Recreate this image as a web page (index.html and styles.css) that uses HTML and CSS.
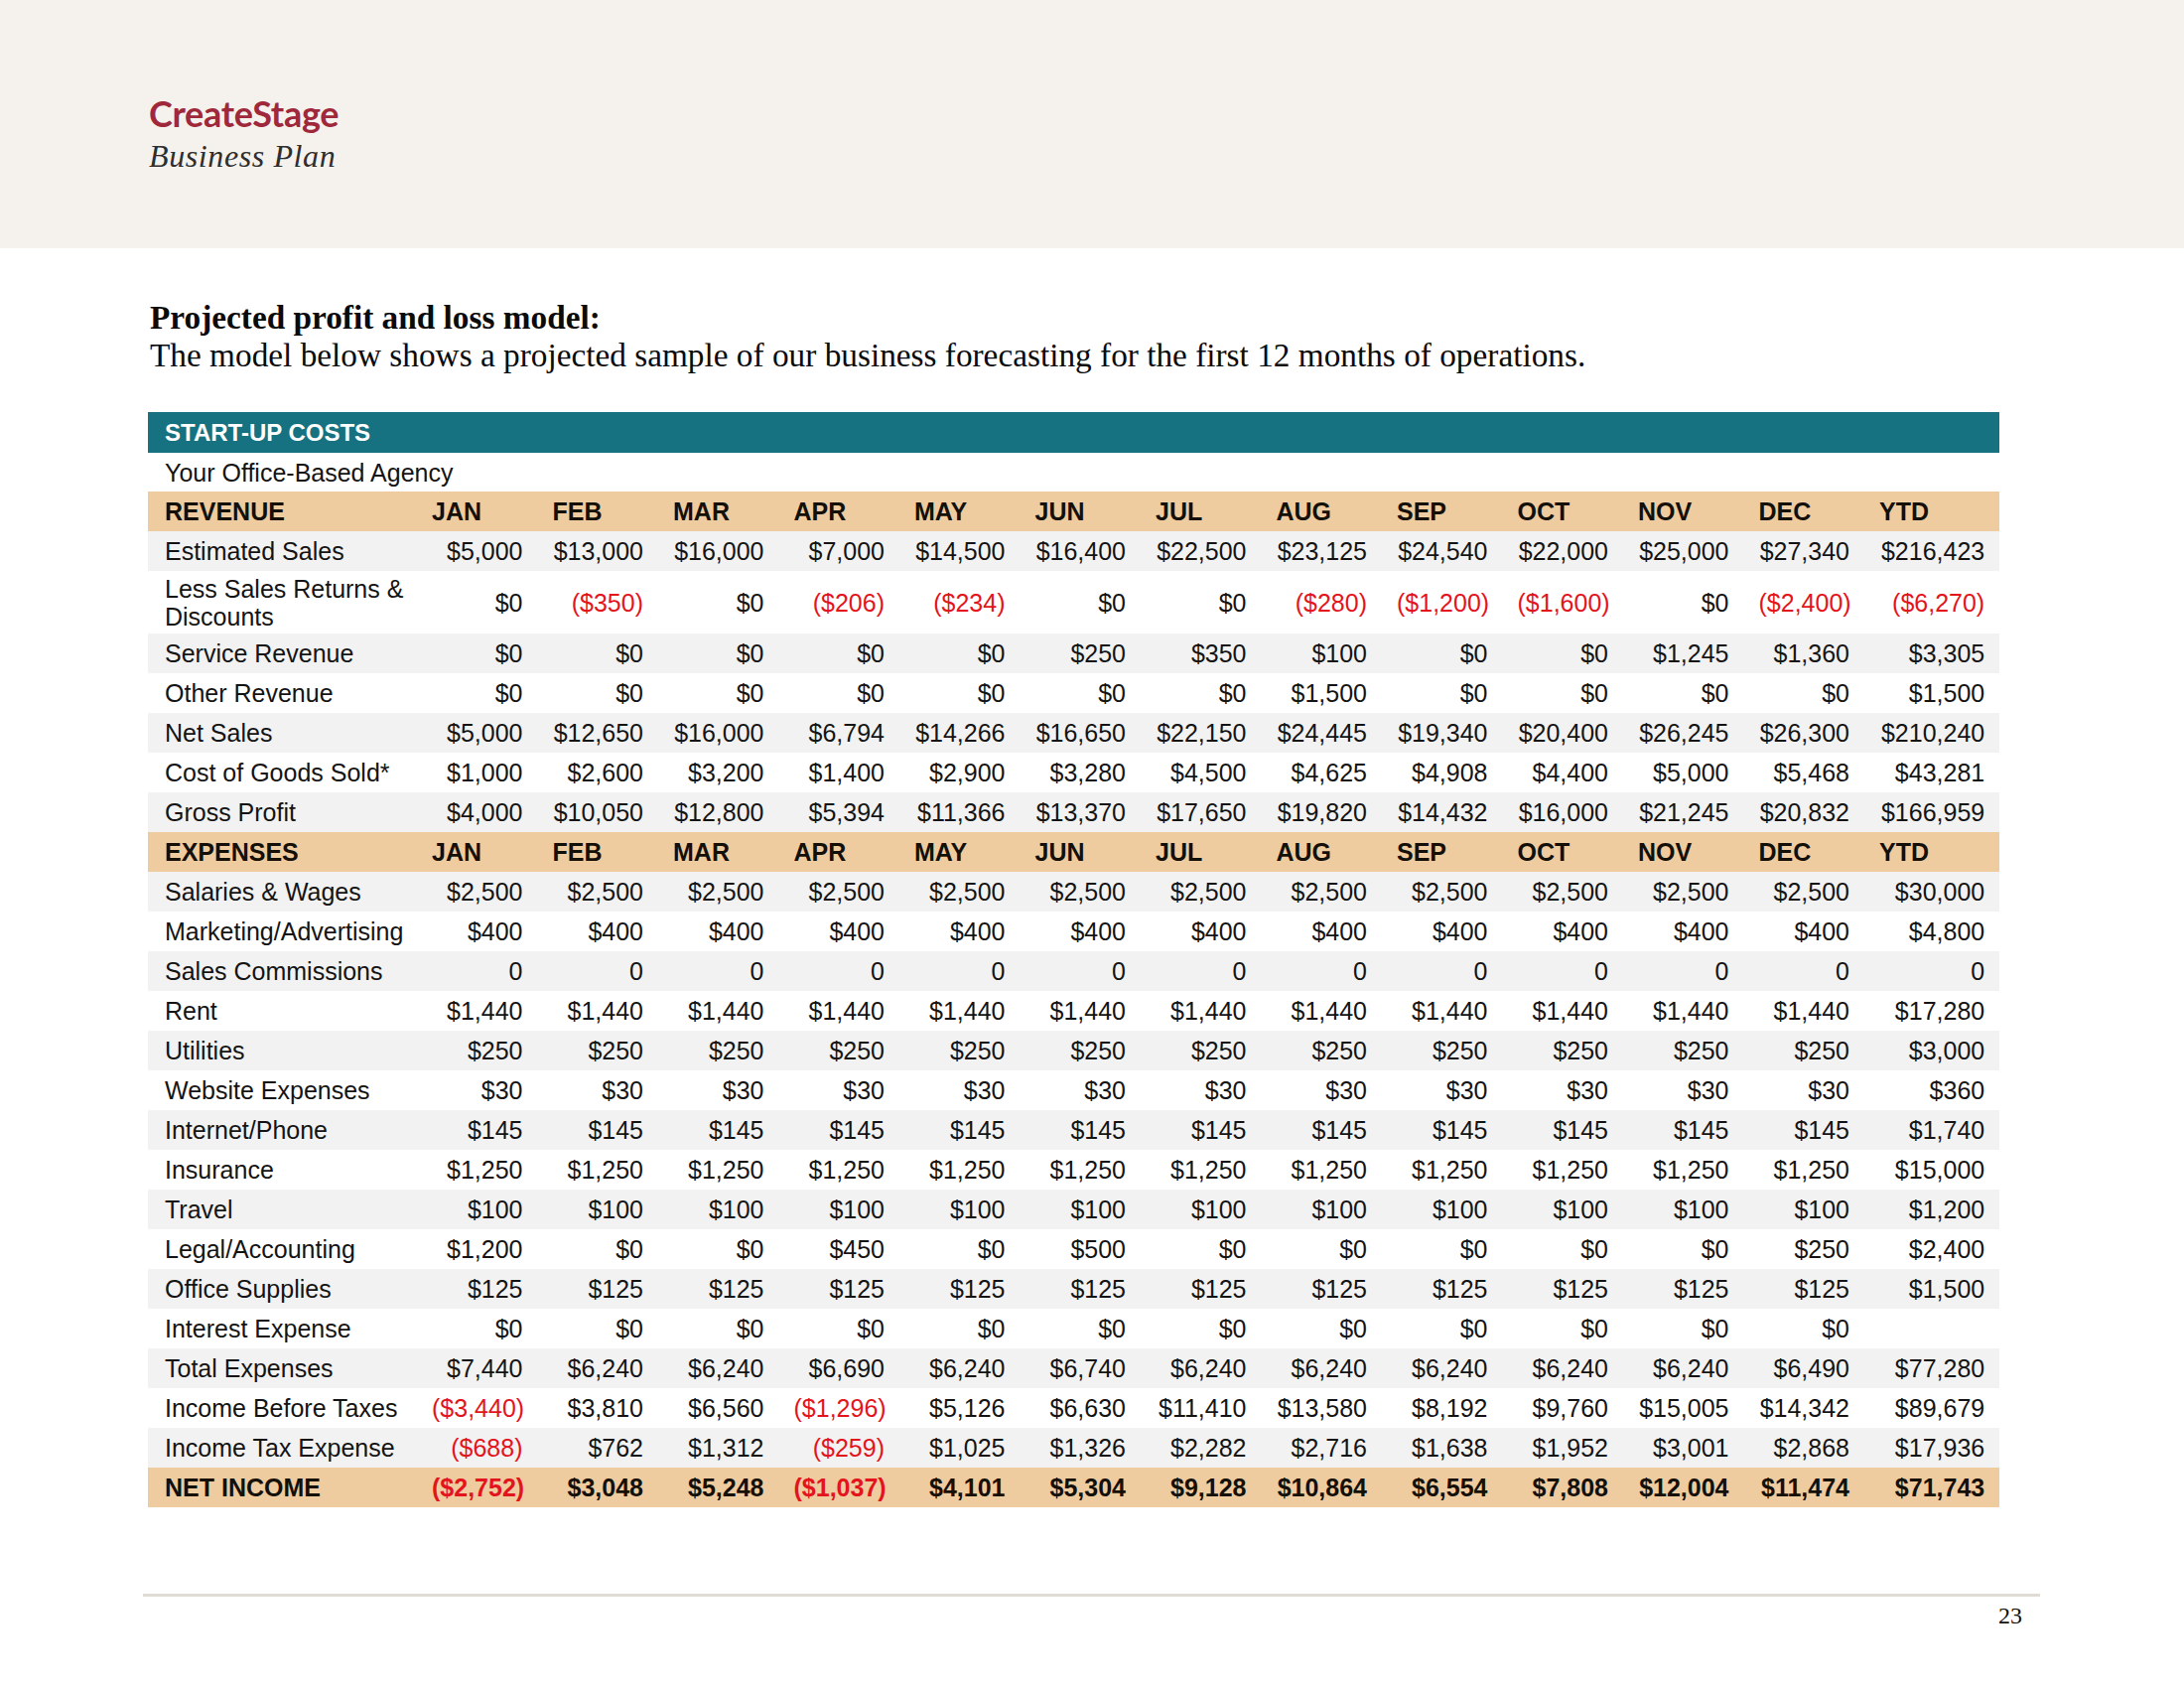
FILE: index.html
```html
<!DOCTYPE html>
<html lang="en">
<head>
<meta charset="utf-8">
<title>CreateStage Business Plan</title>
<link rel="stylesheet" href="styles.css">
</head>
<body>
<header class="top">
  <div class="brand">CreateStage</div>
  <div class="subtitle">Business Plan</div>
</header>
<main class="content">
  <h1 class="title">Projected profit and loss model:</h1>
  <p class="lead">The model below shows a projected sample of our business forecasting for the first 12 months of operations.</p>
  <table class="pl">
    <colgroup>
      <col class="c-label">
      <col class="c-m"><col class="c-m"><col class="c-m"><col class="c-m"><col class="c-m"><col class="c-m">
      <col class="c-m"><col class="c-m"><col class="c-m"><col class="c-m"><col class="c-m"><col class="c-m">
      <col class="c-ytd">
    </colgroup>
    <tbody>
      <tr class="band"><td colspan="14">START-UP COSTS</td></tr>
      <tr class="sub"><td colspan="14">Your Office-Based Agency</td></tr>
      <tr class="head"><th>REVENUE</th><th>JAN</th><th>FEB</th><th>MAR</th><th>APR</th><th>MAY</th><th>JUN</th><th>JUL</th><th>AUG</th><th>SEP</th><th>OCT</th><th>NOV</th><th>DEC</th><th>YTD</th></tr>
      <tr class="alt"><td>Estimated Sales</td><td>$5,000</td><td>$13,000</td><td>$16,000</td><td>$7,000</td><td>$14,500</td><td>$16,400</td><td>$22,500</td><td>$23,125</td><td>$24,540</td><td>$22,000</td><td>$25,000</td><td>$27,340</td><td>$216,423</td></tr>
      <tr class="tall"><td>Less Sales Returns &amp; Discounts</td><td>$0</td><td class="neg">($350)</td><td>$0</td><td class="neg">($206)</td><td class="neg">($234)</td><td>$0</td><td>$0</td><td class="neg">($280)</td><td class="neg">($1,200)</td><td class="neg">($1,600)</td><td>$0</td><td class="neg">($2,400)</td><td class="neg">($6,270)</td></tr>
      <tr class="alt"><td>Service Revenue</td><td>$0</td><td>$0</td><td>$0</td><td>$0</td><td>$0</td><td>$250</td><td>$350</td><td>$100</td><td>$0</td><td>$0</td><td>$1,245</td><td>$1,360</td><td>$3,305</td></tr>
      <tr><td>Other Revenue</td><td>$0</td><td>$0</td><td>$0</td><td>$0</td><td>$0</td><td>$0</td><td>$0</td><td>$1,500</td><td>$0</td><td>$0</td><td>$0</td><td>$0</td><td>$1,500</td></tr>
      <tr class="alt"><td>Net Sales</td><td>$5,000</td><td>$12,650</td><td>$16,000</td><td>$6,794</td><td>$14,266</td><td>$16,650</td><td>$22,150</td><td>$24,445</td><td>$19,340</td><td>$20,400</td><td>$26,245</td><td>$26,300</td><td>$210,240</td></tr>
      <tr><td>Cost of Goods Sold*</td><td>$1,000</td><td>$2,600</td><td>$3,200</td><td>$1,400</td><td>$2,900</td><td>$3,280</td><td>$4,500</td><td>$4,625</td><td>$4,908</td><td>$4,400</td><td>$5,000</td><td>$5,468</td><td>$43,281</td></tr>
      <tr class="alt"><td>Gross Profit</td><td>$4,000</td><td>$10,050</td><td>$12,800</td><td>$5,394</td><td>$11,366</td><td>$13,370</td><td>$17,650</td><td>$19,820</td><td>$14,432</td><td>$16,000</td><td>$21,245</td><td>$20,832</td><td>$166,959</td></tr>
      <tr class="head"><th>EXPENSES</th><th>JAN</th><th>FEB</th><th>MAR</th><th>APR</th><th>MAY</th><th>JUN</th><th>JUL</th><th>AUG</th><th>SEP</th><th>OCT</th><th>NOV</th><th>DEC</th><th>YTD</th></tr>
      <tr class="alt"><td>Salaries &amp; Wages</td><td>$2,500</td><td>$2,500</td><td>$2,500</td><td>$2,500</td><td>$2,500</td><td>$2,500</td><td>$2,500</td><td>$2,500</td><td>$2,500</td><td>$2,500</td><td>$2,500</td><td>$2,500</td><td>$30,000</td></tr>
      <tr><td>Marketing/Advertising</td><td>$400</td><td>$400</td><td>$400</td><td>$400</td><td>$400</td><td>$400</td><td>$400</td><td>$400</td><td>$400</td><td>$400</td><td>$400</td><td>$400</td><td>$4,800</td></tr>
      <tr class="alt"><td>Sales Commissions</td><td>0</td><td>0</td><td>0</td><td>0</td><td>0</td><td>0</td><td>0</td><td>0</td><td>0</td><td>0</td><td>0</td><td>0</td><td>0</td></tr>
      <tr><td>Rent</td><td>$1,440</td><td>$1,440</td><td>$1,440</td><td>$1,440</td><td>$1,440</td><td>$1,440</td><td>$1,440</td><td>$1,440</td><td>$1,440</td><td>$1,440</td><td>$1,440</td><td>$1,440</td><td>$17,280</td></tr>
      <tr class="alt"><td>Utilities</td><td>$250</td><td>$250</td><td>$250</td><td>$250</td><td>$250</td><td>$250</td><td>$250</td><td>$250</td><td>$250</td><td>$250</td><td>$250</td><td>$250</td><td>$3,000</td></tr>
      <tr><td>Website Expenses</td><td>$30</td><td>$30</td><td>$30</td><td>$30</td><td>$30</td><td>$30</td><td>$30</td><td>$30</td><td>$30</td><td>$30</td><td>$30</td><td>$30</td><td>$360</td></tr>
      <tr class="alt"><td>Internet/Phone</td><td>$145</td><td>$145</td><td>$145</td><td>$145</td><td>$145</td><td>$145</td><td>$145</td><td>$145</td><td>$145</td><td>$145</td><td>$145</td><td>$145</td><td>$1,740</td></tr>
      <tr><td>Insurance</td><td>$1,250</td><td>$1,250</td><td>$1,250</td><td>$1,250</td><td>$1,250</td><td>$1,250</td><td>$1,250</td><td>$1,250</td><td>$1,250</td><td>$1,250</td><td>$1,250</td><td>$1,250</td><td>$15,000</td></tr>
      <tr class="alt"><td>Travel</td><td>$100</td><td>$100</td><td>$100</td><td>$100</td><td>$100</td><td>$100</td><td>$100</td><td>$100</td><td>$100</td><td>$100</td><td>$100</td><td>$100</td><td>$1,200</td></tr>
      <tr><td>Legal/Accounting</td><td>$1,200</td><td>$0</td><td>$0</td><td>$450</td><td>$0</td><td>$500</td><td>$0</td><td>$0</td><td>$0</td><td>$0</td><td>$0</td><td>$250</td><td>$2,400</td></tr>
      <tr class="alt"><td>Office Supplies</td><td>$125</td><td>$125</td><td>$125</td><td>$125</td><td>$125</td><td>$125</td><td>$125</td><td>$125</td><td>$125</td><td>$125</td><td>$125</td><td>$125</td><td>$1,500</td></tr>
      <tr><td>Interest Expense</td><td>$0</td><td>$0</td><td>$0</td><td>$0</td><td>$0</td><td>$0</td><td>$0</td><td>$0</td><td>$0</td><td>$0</td><td>$0</td><td>$0</td><td></td></tr>
      <tr class="alt"><td>Total Expenses</td><td>$7,440</td><td>$6,240</td><td>$6,240</td><td>$6,690</td><td>$6,240</td><td>$6,740</td><td>$6,240</td><td>$6,240</td><td>$6,240</td><td>$6,240</td><td>$6,240</td><td>$6,490</td><td>$77,280</td></tr>
      <tr><td>Income Before Taxes</td><td class="neg">($3,440)</td><td>$3,810</td><td>$6,560</td><td class="neg">($1,296)</td><td>$5,126</td><td>$6,630</td><td>$11,410</td><td>$13,580</td><td>$8,192</td><td>$9,760</td><td>$15,005</td><td>$14,342</td><td>$89,679</td></tr>
      <tr class="alt"><td>Income Tax Expense</td><td class="neg">($688)</td><td>$762</td><td>$1,312</td><td class="neg">($259)</td><td>$1,025</td><td>$1,326</td><td>$2,282</td><td>$2,716</td><td>$1,638</td><td>$1,952</td><td>$3,001</td><td>$2,868</td><td>$17,936</td></tr>
      <tr class="total"><td>NET INCOME</td><td class="neg">($2,752)</td><td>$3,048</td><td>$5,248</td><td class="neg">($1,037)</td><td>$4,101</td><td>$5,304</td><td>$9,128</td><td>$10,864</td><td>$6,554</td><td>$7,808</td><td>$12,004</td><td>$11,474</td><td>$71,743</td></tr>
    </tbody>
  </table>
</main>
<footer class="foot">
  <div class="page-num">23</div>
</footer>
</body>
</html>
```

FILE: styles.css
```css
html, body {
  margin: 0;
  padding: 0;
  background: #ffffff;
}

body {
  width: 2200px;
  min-height: 1700px;
  font-family: "Liberation Serif", "Times New Roman", serif;
  color: #111111;
}

.top {
  height: 250px;
  box-sizing: border-box;
  background: #f5f2ee;
  padding: 92px 0 0 150px;
}

.brand {
  font-family: Lato, "Open Sans", sans-serif;
  font-weight: 700;
  font-size: 36px;
  line-height: 44px;
  color: #a0283b;
  letter-spacing: -0.3px;
}

.subtitle {
  margin-top: 3px;
  font-family: "Liberation Serif", "Times New Roman", serif;
  font-style: italic;
  font-size: 32px;
  line-height: 36px;
  color: #2e2e2e;
  letter-spacing: 0.6px;
}

.content {
  padding: 51px 0 0 149px;
}

.title {
  margin: 0 0 0 2px;
  font-size: 33.3px;
  line-height: 38px;
  font-weight: 700;
  color: #0b0b0b;
}

.lead {
  margin: 0 0 38px 2px;
  font-size: 33.3px;
  line-height: 38px;
  color: #0b0b0b;
}

.pl {
  table-layout: fixed;
  border-collapse: collapse;
  width: 1865px;
  font-family: "Liberation Sans", Arial, sans-serif;
  font-size: 25px;
  color: #141414;
}

.c-label { width: 271px; }
.c-m { width: 121.5px; }
.c-ytd { width: 136px; }

.pl td,
.pl th {
  height: 40px;
  box-sizing: border-box;
  padding: 0 15px;
  line-height: 28px;
  text-align: right;
  vertical-align: middle;
  white-space: nowrap;
}

.pl td:first-child,
.pl th:first-child {
  padding-left: 17px;
  padding-right: 4px;
  text-align: left;
  white-space: normal;
}

.pl th {
  text-align: left;
  font-weight: 700;
}

.pl .band td {
  height: 41px;
  background: #167180;
  color: #ffffff;
  font-weight: 700;
  font-size: 24px;
}

.pl .sub td {
  height: 39px;
  background: #ffffff;
  color: #141414;
}

.pl .head th {
  background: #efcca0;
  color: #141008;
}

.pl .alt td {
  background: #f2f2f2;
}

.pl .tall td {
  height: 63px;
}

.pl .total td {
  background: #efcca0;
  font-weight: 700;
  color: #141008;
}

.pl td.neg,
.pl .total td.neg {
  color: #e3141c;
}

.foot {
  margin: 87px 0 0 144px;
  width: 1911px;
  border-top: 3px solid #dfdcd5;
}

.page-num {
  padding: 5px 18px 0 0;
  text-align: right;
  font-family: "Liberation Serif", "Times New Roman", serif;
  font-size: 24px;
  line-height: 28px;
  color: #111111;
}
```
